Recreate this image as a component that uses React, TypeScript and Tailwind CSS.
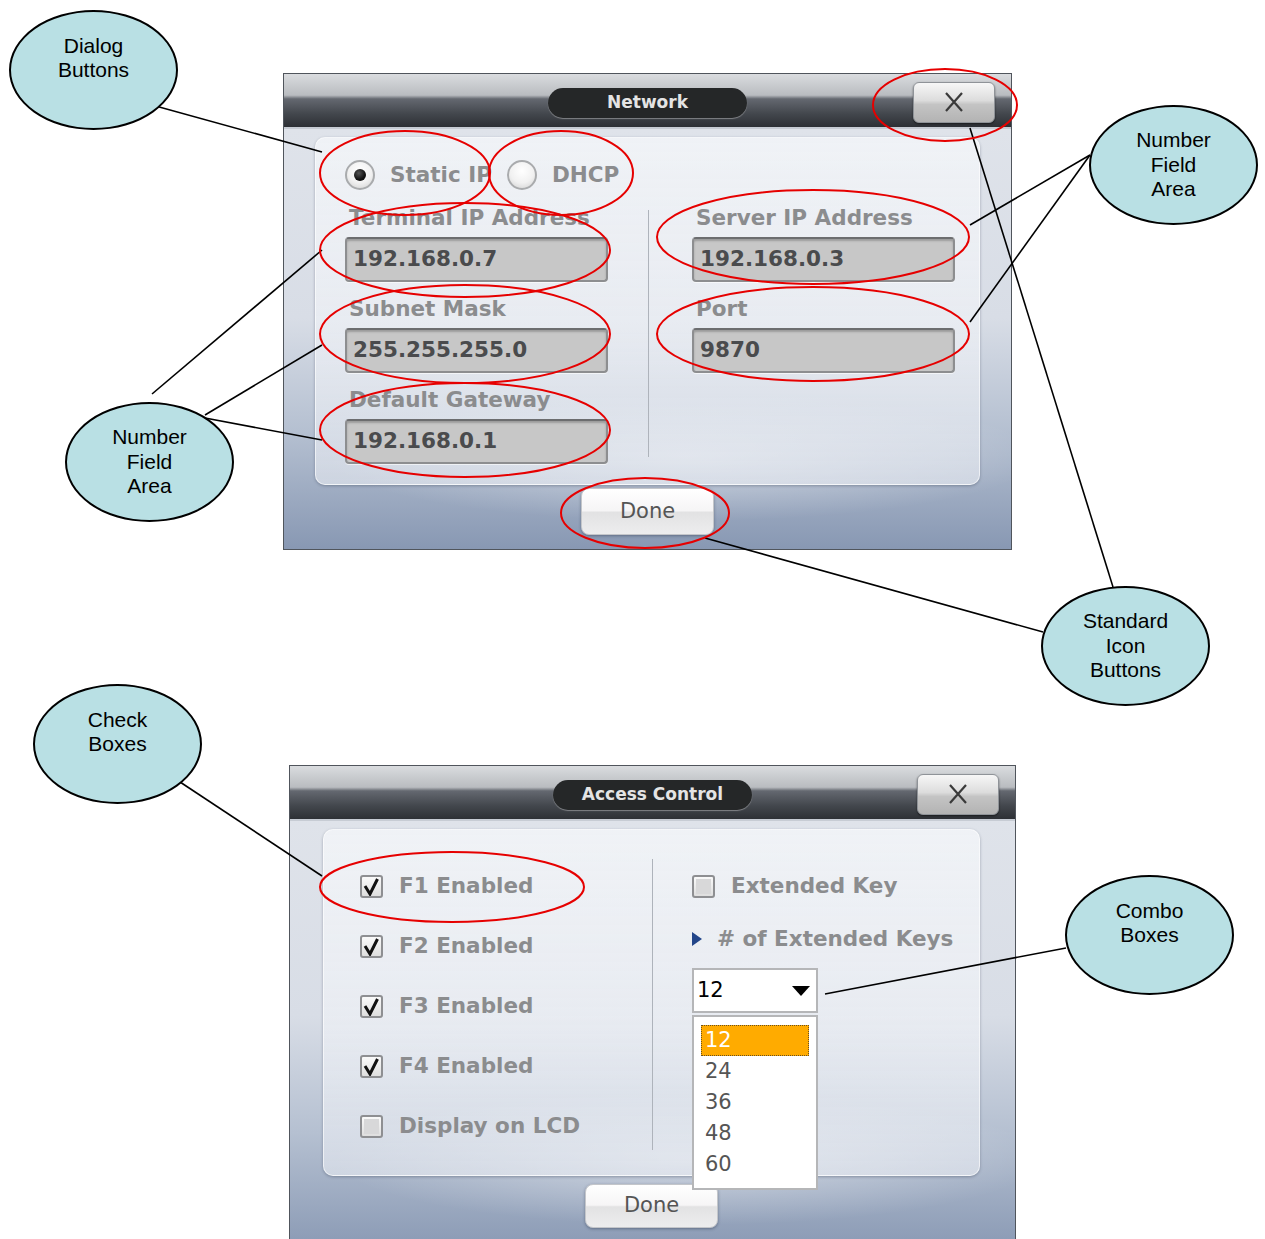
import React from "react";

const UI = "font-['DejaVu_Sans',sans-serif]";

const CloseButton = () => (
  <button className="mr-[16px] mt-[3px] flex h-[41px] w-[82px] items-center justify-center justify-self-end rounded-[6px] border border-[#8f9398] bg-[linear-gradient(to_bottom,#f7f7f7_0%,#dcdcdc_45%,#c4c4c4_55%,#b3b3b3_100%)] shadow-[0_1px_2px_rgba(0,0,0,0.5)]">
    <svg width="22" height="22" viewBox="0 0 22 22">
      <path d="M3 2 L19 20 M19 2 L3 20" stroke="#3a3a3a" strokeWidth="2.2" fill="none" />
    </svg>
  </button>
);

const TitleBar = ({ title }: { title: string }) => (
  <div className="grid h-[55px] grid-cols-[1fr_auto_1fr] items-center border-b-2 border-[#c7ccd4] bg-[linear-gradient(to_bottom,#dadcdf_0%,#b9bcc0_40%,#646870_47%,#43474d_75%,#2d3035_100%)]">
    <div />
    <div className="mt-[4px] flex h-[30px] w-[199px] items-center justify-center rounded-full bg-[#252728] text-[17px] font-bold text-[#e4e4e4] shadow-[0_1px_1px_rgba(255,255,255,0.35)]">
      {title}
    </div>
    <CloseButton />
  </div>
);

const DoneButton = ({ h }: { h: string }) => (
  <button
    className={`flex w-[133px] items-center justify-center rounded-[8px] border border-[#c4c6ca] bg-[linear-gradient(to_bottom,#ffffff_0%,#f6f5f6_48%,#e2e2e3_52%,#ededee_100%)] text-[21px] text-[#555] shadow-[0_1px_3px_rgba(40,50,70,0.45)] ${h}`}
  >
    Done
  </button>
);

const Radio = ({ on }: { on?: boolean }) => (
  <div className="flex h-[30px] w-[30px] items-center justify-center rounded-full border-2 border-[#a9abad] bg-[radial-gradient(circle_at_50%_35%,#ffffff_0%,#f1f1f1_55%,#cfcfcf_100%)]">
    {on && <div className="h-[12px] w-[12px] rounded-full bg-[radial-gradient(circle_at_40%_35%,#555_0%,#111_60%)]" />}
  </div>
);

const Field = ({ label, value, mt }: { label: string; value: string; mt?: string }) => (
  <div className={`flex flex-col ${mt ?? ""}`}>
    <div className="h-[28px] pl-[4px] text-[21.5px] font-bold leading-[28px] text-[#8b8c8e]">{label}</div>
    <div className="mt-[5px] flex h-[45px] w-[263px] items-center rounded-[4px] border-2 border-[#8d8e90] border-t-[#6c6d6f] bg-[#c7c7c7] pl-[6px] text-[21.5px] font-bold text-[#4a4b4d] shadow-[inset_0_2px_2px_rgba(0,0,0,0.22),0_1px_0_rgba(255,255,255,0.6)]">
      {value}
    </div>
  </div>
);

const Check = ({ on }: { on?: boolean }) => (
  <div className="flex h-[23px] w-[23px] items-center justify-center rounded-[3px] border-2 border-[#8e8f92] bg-[linear-gradient(to_bottom,#fafafa,#dedede)]">
    {on ? (
      <svg width="19" height="19" viewBox="0 0 19 19">
        <path d="M3 9 L8 17 L15.5 2" stroke="#111" strokeWidth="3" fill="none" strokeLinejoin="miter" />
      </svg>
    ) : (
      <div className="h-[15px] w-[15px] bg-[#d8d8d9]" />
    )}
  </div>
);

const CheckRow = ({ label, on }: { label: string; on?: boolean }) => (
  <div className="flex h-[30px] items-center gap-[16px]">
    <Check on={on} />
    <span className="text-[21.5px] font-bold text-[#8b8c8e]">{label}</span>
  </div>
);

const BODY_BG =
  "bg-[radial-gradient(ellipse_70%_22%_at_55%_78%,rgba(255,255,255,0.45),rgba(255,255,255,0)_70%),linear-gradient(to_bottom,#dfe3ea_0%,#d8dde6_45%,#b5c0d1_72%,#8898b3_100%)]";
const PANEL =
  "rounded-[10px] border border-white/60 bg-[linear-gradient(to_bottom,rgba(245,247,250,0.75),rgba(235,238,244,0.6))] shadow-[0_1px_3px_rgba(60,70,90,0.4)]";

const NetworkDialog = () => (
  <div className={`ml-[283px] mt-[73px] flex h-[477px] w-[729px] flex-col border border-[#50555c] ${UI}`}>
    <TitleBar title="Network" />
    <div className={`flex flex-1 flex-col items-center px-[31px] pt-[8px] ${BODY_BG}`}>
      <div className={`h-[348px] w-full pl-[29px] pt-[22px] ${PANEL}`}>
        <div className="flex h-[30px] items-center">
          <Radio on />
          <span className="ml-[15px] text-[21.5px] font-bold text-[#8b8c8e]">Static IP</span>
          <div className="ml-[15px]">
            <Radio />
          </div>
          <span className="ml-[15px] text-[21.5px] font-bold text-[#8b8c8e]">DHCP</span>
        </div>
        <div className="mt-[14px] flex">
          <div className="flex w-[263px] flex-col">
            <Field label="Terminal IP Address" value="192.168.0.7" />
            <Field label="Subnet Mask" value="255.255.255.0" mt="mt-[13px]" />
            <Field label="Default Gateway" value="192.168.0.1" mt="mt-[13px]" />
          </div>
          <div className="ml-[40px] mt-[6px] h-[247px] w-[1px] bg-[#aeb3bb]" />
          <div className="ml-[43px] flex flex-col">
            <Field label="Server IP Address" value="192.168.0.3" />
            <Field label="Port" value="9870" mt="mt-[13px]" />
          </div>
        </div>
      </div>
      <div className="mt-[3px]">
        <DoneButton h="h-[47px]" />
      </div>
    </div>
  </div>
);

const AccessDialog = () => (
  <div className={`ml-[289px] mt-[215px] flex h-[490px] w-[727px] flex-col border border-[#50555c] ${UI}`}>
    <TitleBar title="Access Control" />
    <div className={`flex flex-1 flex-col items-center pl-[33px] pr-[35px] pt-[8px] ${BODY_BG}`}>
      <div className={`flex h-[347px] w-full pl-[36px] pt-[41px] ${PANEL}`}>
        <div className="flex w-[292px] flex-col gap-[30px]">
          <CheckRow label="F1 Enabled" on />
          <CheckRow label="F2 Enabled" on />
          <CheckRow label="F3 Enabled" on />
          <CheckRow label="F4 Enabled" on />
          <CheckRow label="Display on LCD" />
        </div>
        <div className="-mt-[12px] h-[291px] w-[1px] bg-[#aeb3bb]" />
        <div className="ml-[39px] flex flex-col">
          <CheckRow label="Extended Key" />
          <div className="mt-[23px] flex h-[30px] items-center gap-[15px]">
            <svg width="10" height="14" viewBox="0 0 10 14">
              <path d="M0 0 L10 7 L0 14 Z" fill="#23468a" />
            </svg>
            <span className="text-[21.5px] font-bold text-[#8b8c8e]">
              # of Extended Keys
            </span>
          </div>
          <div className="relative mt-[14px]">
            <div className="flex h-[45px] w-[126px] items-center justify-between border-2 border-[#b5b6b8] bg-white pl-[3px] pr-[6px] text-[21px] text-black">
              <span>12</span>
              <svg width="18" height="10" viewBox="0 0 18 10">
                <path d="M0 0 L18 0 L9 10 Z" fill="#000" />
              </svg>
            </div>
            <div className="absolute left-0 top-[47px] z-10 flex h-[175px] w-[126px] flex-col border-2 border-[#b5b6b8] bg-white px-[7px] pt-[8px] text-[21px] leading-[31px] text-[#555]">
              <div className="h-[31px] border border-dotted border-[#6a5020] bg-[#ffab00] pl-[3px] leading-[29px] text-white">12</div>
              <div className="pl-[4px]">24</div>
              <div className="pl-[4px]">36</div>
              <div className="pl-[4px]">48</div>
              <div className="pl-[4px]">60</div>
            </div>
          </div>
        </div>
      </div>
      <div className="mt-[8px]">
        <DoneButton h="h-[44px]" />
      </div>
    </div>
  </div>
);

const Callout = ({ pos, lines, lift }: { pos: string; lines: string[]; lift?: boolean }) => (
  <div
    className={`absolute flex h-[120px] w-[169px] flex-col items-center justify-center rounded-[50%] border-2 border-black bg-[#b9e0e4] text-center font-['Liberation_Sans',Arial,sans-serif] text-[21px] leading-[24.5px] text-black ${lift ? "pb-[24px]" : ""} ${pos}`}
  >
    {lines.map((l) => (
      <span key={l}>{l}</span>
    ))}
  </div>
);

const Annotations = () => (
  <svg className="pointer-events-none absolute left-0 top-0" width="1265" height="1239" viewBox="0 0 1265 1239">
    <g stroke="#000" strokeWidth="1.6">
      <line x1="152" y1="105" x2="322" y2="152" />
      <line x1="970" y1="225" x2="1090" y2="155" />
      <line x1="970" y1="322" x2="1090" y2="155" />
      <line x1="152" y1="394" x2="322" y2="250" />
      <line x1="205" y1="415" x2="322" y2="345" />
      <line x1="205" y1="418" x2="322" y2="440" />
      <line x1="970" y1="128" x2="1113" y2="587" />
      <line x1="705" y1="538" x2="1043" y2="632" />
      <line x1="177" y1="780" x2="322" y2="876" />
      <line x1="825" y1="994" x2="1066" y2="948" />
    </g>
    <g stroke="#e60000" strokeWidth="2" fill="none">
      <ellipse cx="405" cy="173" rx="85" ry="42" />
      <ellipse cx="561" cy="173" rx="72" ry="42" />
      <ellipse cx="945" cy="105" rx="72" ry="36" />
      <ellipse cx="465" cy="250" rx="145" ry="47" />
      <ellipse cx="465" cy="334" rx="145" ry="49" />
      <ellipse cx="465" cy="430" rx="145" ry="47" />
      <ellipse cx="813" cy="237" rx="156" ry="47" />
      <ellipse cx="813" cy="334" rx="156" ry="47" />
      <ellipse cx="645" cy="513" rx="84" ry="35" />
      <ellipse cx="452" cy="887" rx="132" ry="35" />
    </g>
  </svg>
);

export default function App() {
  return (
    <div className="relative h-[1239px] w-[1265px] overflow-hidden bg-white">
      <NetworkDialog />
      <AccessDialog />
      <Annotations />
      <Callout pos="left-[9px] top-[10px]" lines={["Dialog", "Buttons"]} lift />
      <Callout pos="left-[1089px] top-[105px]" lines={["Number", "Field", "Area"]} />
      <Callout pos="left-[65px] top-[402px]" lines={["Number", "Field", "Area"]} />
      <Callout pos="left-[1041px] top-[586px]" lines={["Standard", "Icon", "Buttons"]} />
      <Callout pos="left-[33px] top-[684px]" lines={["Check", "Boxes"]} lift />
      <Callout pos="left-[1065px] top-[875px]" lines={["Combo", "Boxes"]} lift />
    </div>
  );
}
